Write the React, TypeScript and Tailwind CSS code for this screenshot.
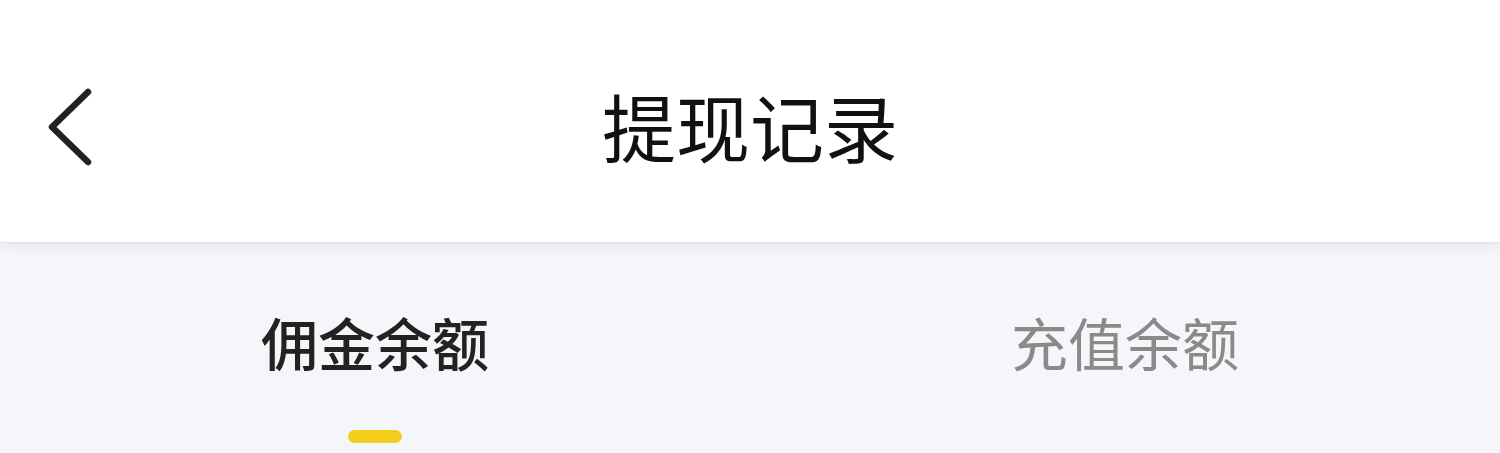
import React from "react";

export default function App() {
  return (
    <div
      className="w-[1500px] h-[453px] overflow-hidden bg-[#f5f6f9]"
      style={{ fontFamily: '"Noto Sans CJK SC", "Noto Sans", sans-serif' }}
    >
      <div className="relative z-10 h-[243px] bg-white flex items-center justify-center shadow-[0_2px_14px_rgba(0,0,0,0.08)] border-b border-[#e2e3e6]">
        <button className="absolute left-[44px] top-[84px] w-[56px] h-[84px] flex items-center justify-center">
          <svg width="56" height="84" viewBox="0 0 56 84">
            <path
              d="M44 8 L8 43 L44 78"
              fill="none"
              stroke="#222"
              strokeWidth="6.5"
              strokeLinecap="round"
              strokeLinejoin="round"
            />
          </svg>
        </button>
        <h1 className="text-[74px] leading-[74px] text-[#111] font-normal mt-[8px]">提现记录</h1>
      </div>
      <div className="flex">
        <div className="flex-1 flex flex-col items-center pt-[70px]">
          <span className="text-[57px] leading-[57px] font-medium text-[#222]">佣金余额</span>
          <div className="mt-[60px] w-[54px] h-[13px] rounded-full bg-[#f2cd1b]" />
        </div>
        <div className="flex-1 flex flex-col items-center pt-[70px]">
          <span className="text-[57px] leading-[57px] font-normal text-[#8a8a8a]">充值余额</span>
        </div>
      </div>
    </div>
  );
}
